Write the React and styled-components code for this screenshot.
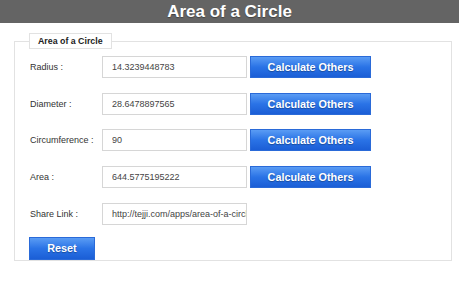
import styled, { createGlobalStyle } from "styled-components";

const GlobalStyle = createGlobalStyle`
  body {
    margin: 0;
    background: #fff;
    font-family: "Liberation Sans", Arial, sans-serif;
  }
`;

const Header = styled.div`
  height: 23px;
  background: #646464;
  display: flex;
  align-items: center;
  justify-content: center;
`;

const Title = styled.h1`
  margin: 0;
  font-size: 17px;
  font-weight: bold;
  color: #fff;
  text-shadow: 0 1px 1px rgba(0, 0, 0, 0.35);
`;

const Panel = styled.fieldset`
  margin: 10px 7px 0 14px;
  padding: 7px 14px 0 14px;
  border: 1px solid #e2e2e2;
`;

const Legend = styled.legend`
  padding: 0 8px;
  height: 16px;
  line-height: 15px;
  box-sizing: border-box;
  border: 1px solid #e2e2e2;
  background: #fff;
  font-size: 8.8px;
  font-weight: bold;
  color: #222;
`;

const Row = styled.div`
  display: flex;
  align-items: center;
  height: 22px;
  margin-bottom: ${(props) => props.$space}px;
`;

const Label = styled.label`
  width: 73px;
  font-size: 9px;
  color: #333;
  padding-left: 1px;
  box-sizing: border-box;
  flex-shrink: 0;
`;

const Field = styled.input`
  box-sizing: border-box;
  width: 145px;
  height: 22px;
  margin: 0;
  padding: 0 0 0 9px;
  border: 1px solid #d6d6d6;
  font-family: "Liberation Sans", Arial, sans-serif;
  font-size: 9px;
  color: #444;
  outline: none;
`;

const Button = styled.button`
  box-sizing: border-box;
  width: ${(props) => props.$width}px;
  height: ${(props) => props.$height}px;
  margin: 0 0 0 ${(props) => props.$offset || 0}px;
  padding: 0;
  border: 1px solid #2a6ad8;
  background: linear-gradient(#5a9cf4, #2a73e6 50%, #1b5ed6);
  color: #fff;
  font-family: "Liberation Sans", Arial, sans-serif;
  font-size: 10.8px;
  font-weight: bold;
  text-shadow: 0 1px 1px rgba(0, 0, 0, 0.3);
  cursor: pointer;
`;

const rows = [
  { label: "Radius :", value: "14.3239448783" },
  { label: "Diameter :", value: "28.6478897565" },
  { label: "Circumference :", value: "90" },
  { label: "Area :", value: "644.5775195222" },
];

const App = () => {
  return (
    <>
      <GlobalStyle />
      <Header>
        <Title>Area of a Circle</Title>
      </Header>
      <Panel>
        <Legend>Area of a Circle</Legend>
        {rows.map((row) => (
          <Row key={row.label} $space={14.7}>
            <Label>{row.label}</Label>
            <Field readOnly value={row.value} />
            <Button $width={121} $height={22} $offset={3}>
              Calculate Others
            </Button>
          </Row>
        ))}
        <Row $space={12}>
          <Label>Share Link :</Label>
          <Field readOnly value="http://tejji.com/apps/area-of-a-circle" />
        </Row>
        <Button $width={66} $height={23}>
          Reset
        </Button>
      </Panel>
    </>
  );
};

export default App;
